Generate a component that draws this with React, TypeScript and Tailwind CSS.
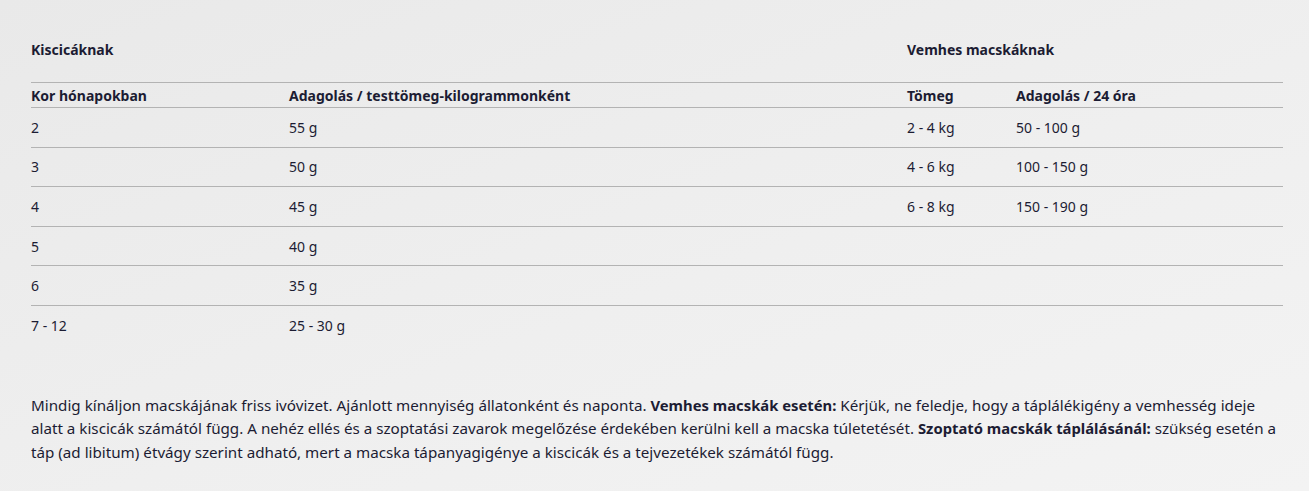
import React from 'react';

const rows: [string, string, string, string][] = [
  ['2', '55 g', '2 - 4 kg', '50 - 100 g'],
  ['3', '50 g', '4 - 6 kg', '100 - 150 g'],
  ['4', '45 g', '6 - 8 kg', '150 - 190 g'],
  ['5', '40 g', '', ''],
  ['6', '35 g', '', ''],
  ['7 - 12', '25 - 30 g', '', ''],
];

const cols = 'grid grid-cols-[258px_618px_109px_267px]';

const App: React.FC = () => {
  return (
    <div
      className="min-h-[491px] w-full bg-[linear-gradient(160deg,#e9e9e9_0%,#efefef_55%,#f3f3f3_100%)] text-[#1c1c33]"
      style={{ fontFamily: '"Noto Sans", "Open Sans", sans-serif' }}
    >
      <div className="pl-[31px] pt-[39px] w-[1283px]">
        <div className={`${cols} text-[14px] font-bold h-[43px]`}>
          <div>Kiscicáknak</div>
          <div />
          <div className="col-span-2">Vemhes macskáknak</div>
        </div>
        <div className={`${cols} text-[14px] font-bold h-[25px] items-center border-t border-[#b3b3b3]`}>
          <div>Kor hónapokban</div>
          <div>Adagolás / testtömeg-kilogrammonként</div>
          <div>Tömeg</div>
          <div>Adagolás / 24 óra</div>
        </div>
        {rows.map((r, i) => (
          <div
            key={i}
            className={`${cols} text-[14px] h-[39.6px] items-center border-t border-[#b3b3b3]`}
          >
            {r.map((c, j) => (
              <div key={j}>{c}</div>
            ))}
          </div>
        ))}
        <p className="mt-[49px] text-[15.2px] leading-[23.5px] w-[1252px]">
          Mindig kínáljon macskájának friss ivóvizet. Ajánlott mennyiség állatonként és naponta.{' '}
          <span className="font-bold text-[14.8px]">Vemhes macskák esetén:</span> Kérjük, ne feledje, hogy a táplálékigény a vemhesség ideje
          alatt a kiscicák számától függ. A nehéz ellés és a szoptatási zavarok megelőzése érdekében
          kerülni kell a macska túletetését. <span className="font-bold text-[14.8px]">Szoptató macskák táplálásánál:</span> szükség esetén a
          táp (ad libitum) étvágy szerint adható, mert a macska tápanyagigénye a kiscicák és a
          tejvezetékek számától függ.
        </p>
      </div>
    </div>
  );
};

export default App;
